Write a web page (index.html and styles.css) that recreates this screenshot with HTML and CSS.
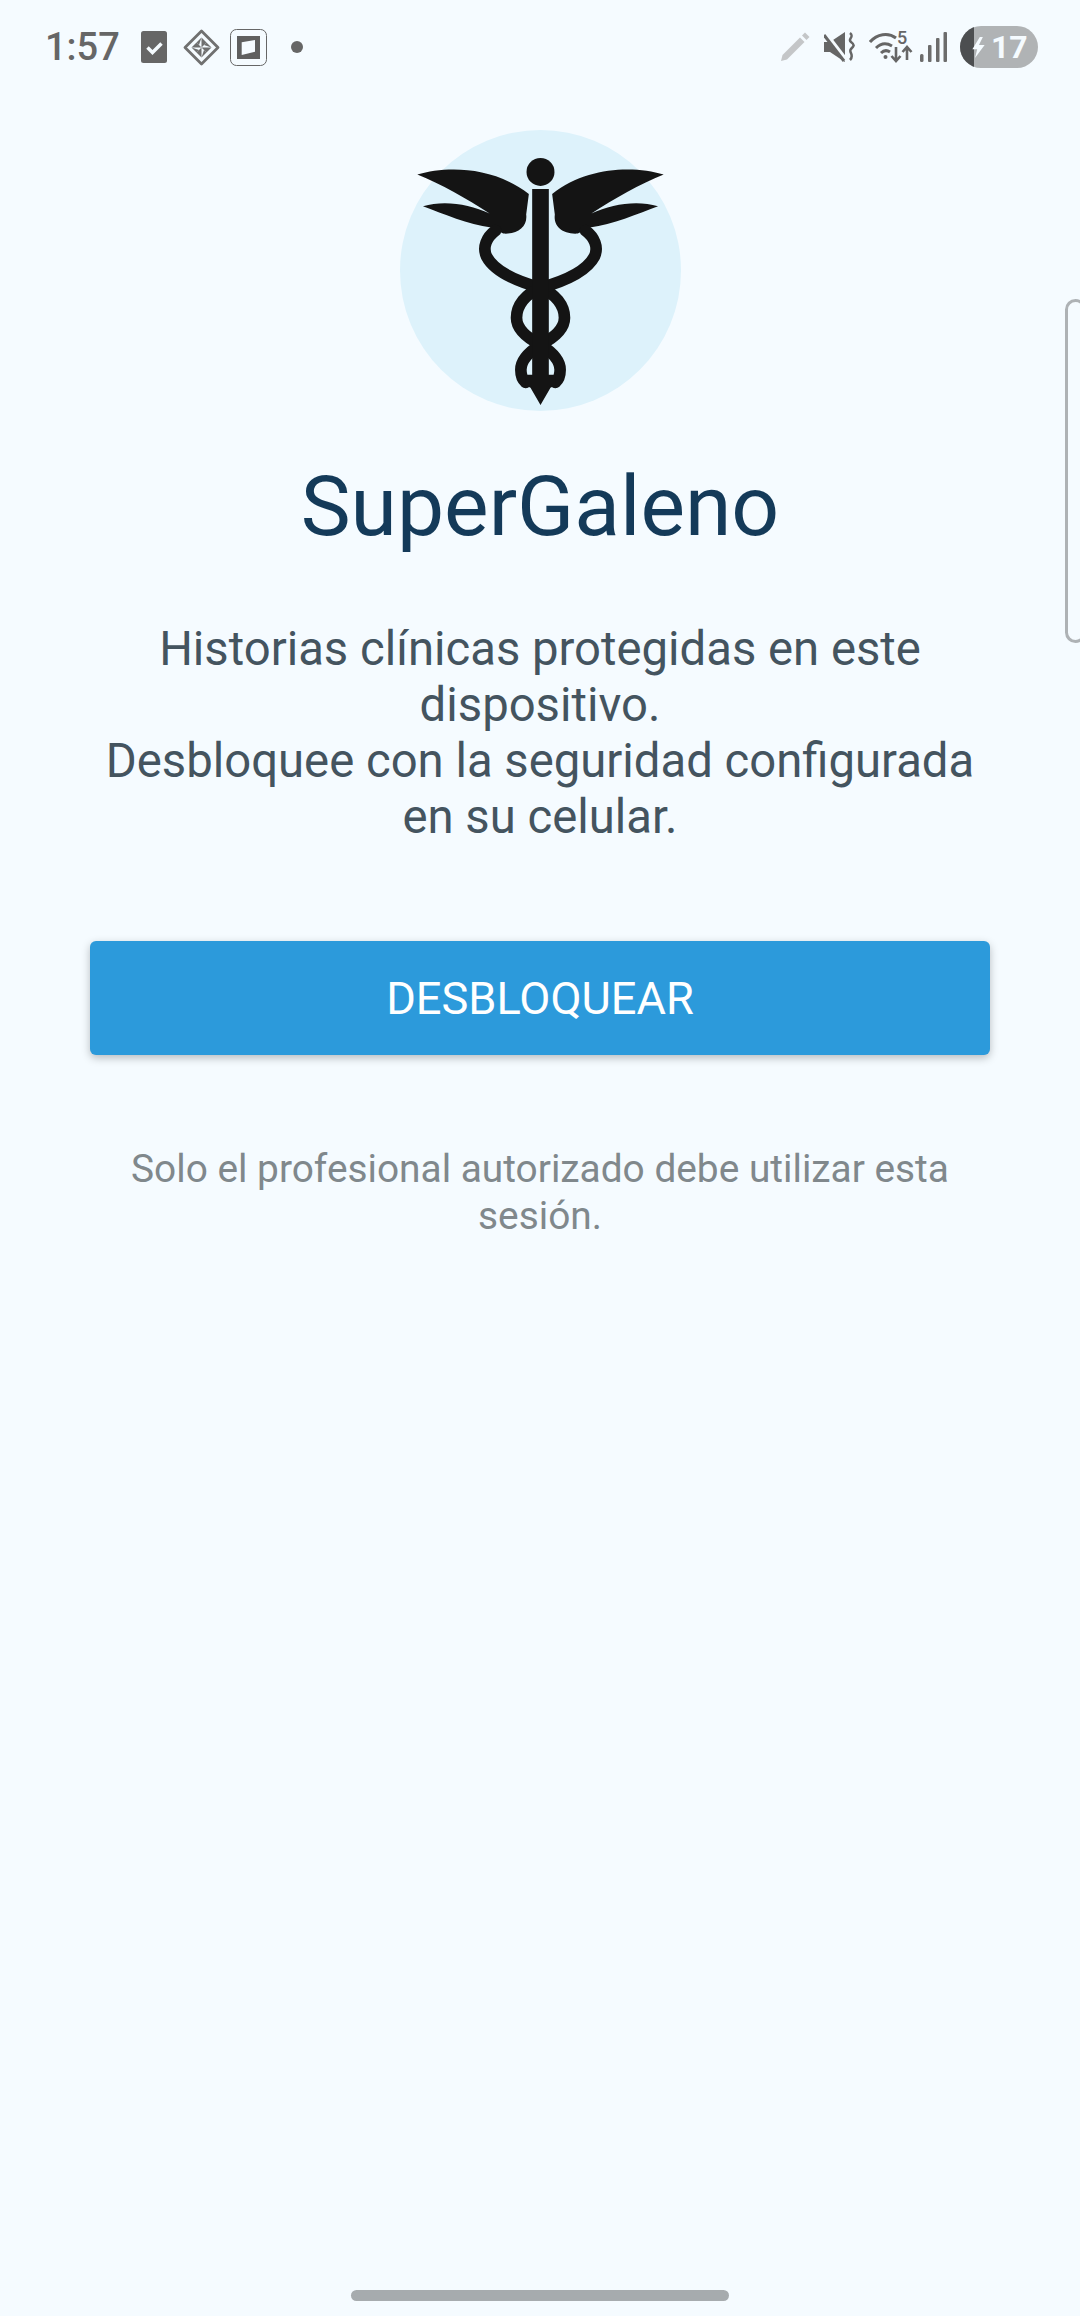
FILE: index.html
```html
<!DOCTYPE html>
<html lang="es">
<head>
    <meta charset="UTF-8">
    <meta name="viewport" content="width=device-width, initial-scale=1.0">
    <title>SuperGaleno</title>
    <link rel="stylesheet" href="styles.css">
</head>
<body>
    <div class="screen">
        <div class="status-bar">
            <div class="status-left">
                <span class="clock">1:57</span>
                <svg class="icon-check" viewBox="0 0 26 32">
                    <rect width="26" height="32" rx="2.5" fill="#666"/>
                    <path d="M6.500 16.500l5 5 9-9" fill="none" stroke="#f5fbff" stroke-width="3.500"/>
                </svg>
                <svg class="icon-diamond" viewBox="0 0 37 37">
                    <path d="M18.500 2L35 18.500 18.500 35 2 18.500Z" fill="none" stroke="#707070" stroke-width="2.800" stroke-linejoin="round"/>
                    <!-- pinwheel in the middle -->
                    <g fill="#6f6f6f">
                        <path d="M18.500 8.500L23.500 13.500 18.500 18.500Z"/>
                        <path d="M28.500 18.500L23.500 23.500 18.500 18.500Z"/>
                        <path d="M18.500 28.500L13.500 23.500 18.500 18.500Z"/>
                        <path d="M8.500 18.500L13.500 13.500 18.500 18.500Z"/>
                        <path d="M18.500 8.500L13.500 13.500 16 16Z"/>
                        <path d="M28.500 18.500L23.500 13.500 21 16Z"/>
                        <path d="M18.500 28.500L23.500 23.500 21 21Z"/>
                        <path d="M8.500 18.500L13.500 23.500 16 21Z"/>
                    </g>
                </svg>
                <svg class="icon-square" viewBox="0 0 37 37">
                    <rect x=".5" y=".5" width="36" height="36" rx="6" fill="none" stroke="#666"/>
                    <path d="M7 7h23v23H7Z" fill="#5f5f5f"/>
                    <path d="M11.700 13.300L25 11v11.700L11.700 26Z" fill="#f5fbff"/>
                </svg>
                <span class="dot"></span>
            </div>
            <div class="status-right">
                <svg class="icon-pencil" viewBox="0 0 30 30">
                    <path d="M1 29l1.500-6L20 5.500 24.500 10 7 27.500Z" fill="#c4c6c8"/>
                    <path d="M22 3.500l3-3L29.500 5l-3 3Z" fill="#c4c6c8"/>
                </svg>
                <svg class="icon-mute" viewBox="0 0 31 30">
                    <path d="M0 10h6L21 0v30L6 20H0Z" fill="#666"/>
                    <path d="M2 2l20 26" stroke="#f5fbff" stroke-width="4.500"/>
                    <path d="M0 3l20 26" stroke="#666" stroke-width="3"/>
                    <path d="M26 1c5 4-3 6 1 9s3 4 0 7 4 6-1 11" fill="none" stroke="#666" stroke-width="2.500"/>
                </svg>
                <div class="wifi">
                    <svg class="icon-wifi" viewBox="0 0 44 32">
                        <g fill="none" stroke="#666" stroke-width="3">
                            <path d="M1 11C8 3 19 1 27 7"/>
                            <path d="M7 17c5-5 11-5 16-2"/>
                            <path d="M12 22c3-3 6-3 9-1"/>
                            <path d="M27 16v13M22.500 25l4.500 5 4.500-5" stroke-width="2.600"/>
                            <path d="M38 29V17M33.500 21l4.500-5 4.500 5" stroke-width="2.600"/>
                        </g>
                        <circle cx="16.500" cy="26" r="2" fill="#666"/>
                    </svg>
                    <span class="wifi-gen">5</span>
                </div>
                <svg class="icon-signal" viewBox="0 0 28 30">
                    <g fill="#6c6c6c">
                        <rect x="1" y="22" width="3.500" height="8" rx="1.500"/>
                        <rect x="9" y="13" width="3.500" height="17" rx="1"/>
                        <rect x="17" y="6" width="3.500" height="24" rx="1"/>
                        <rect x="24.500" y="0" width="3.500" height="30" rx="1"/>
                    </g>
                </svg>
                <div class="battery">
                    <span class="battery-fill"></span>
                    <svg class="icon-bolt" viewBox="0 0 14 24">
                        <path d="M8.500 0L0 14h5.500L3 24l11-15H7.500L12 0Z" fill="#f5fbff"/>
                    </svg>
                    <span class="battery-level">17</span>
                </div>
            </div>
        </div>

        <div class="edge-handle"></div>

        <div class="content">
            <svg class="logo" viewBox="58 58 844 844">
                <circle cx="480" cy="480" r="422" fill="#ddf2fb"/>
                <g id="half">
                    <!-- left wing -->
                    <path fill="#141414" d="M110 192C200 165 340 168 445 250L437 312C442 350 410 372 368 369L332 351C262 342 190 310 127 287C190 268 265 280 327 309C260 265 180 220 110 192Z"/>
                    <!-- snake -->
                    <path fill="none" stroke="#141414" stroke-width="35" stroke-linecap="round" d="M345 360C318 380 305 410 318 438C340 480 400 510 480 532C525 550 552 585 552 622C552 655 525 680 480 703C445 725 421 750 421 778C421 795 426 808 435 816"/>
                </g>
                <use href="#half" transform="matrix(-1 0 0 1 960 0)"/>
                <circle cx="480" cy="184" r="42" fill="#141414"/>
                <!-- staff and arrow tip -->
                <path fill="#141414" d="M455 235H505V793H525V825L510 832L480 884L450 832L435 825V793H455Z"/>
            </svg>
            <h1 class="title">SuperGaleno</h1>
            <p class="lead">Historias clínicas protegidas en este dispositivo.<br>Desbloquee con la seguridad configurada en su celular.</p>
            <button class="unlock-btn" type="button">DESBLOQUEAR</button>
            <p class="note">Solo el profesional autorizado debe utilizar esta sesión.</p>
        </div>

        <div class="home-bar"></div>
    </div>
</body>
</html>
```

FILE: styles.css
```css
html, body {
    margin: 0;
    padding: 0;
}
body {
    background-color: #f5fbff;
    font-family: Roboto, "Liberation Sans", sans-serif;
}
.screen {
    position: relative;
    width: 1080px;
    height: 2316px;
    display: flex;
    flex-direction: column;
    overflow: hidden;
}

/* status bar */
.status-bar {
    height: 94px;
    padding: 0 42px 0 45px;
    display: flex;
    justify-content: space-between;
    align-items: center;
    box-sizing: border-box;
}
.status-left, .status-right {
    display: flex;
    align-items: center;
}
.clock {
    font-size: 38px;
    font-weight: 500;
    color: #666;
    width: 96px;
}
.icon-check {
    width: 26px;
    height: 32px;
}
.icon-diamond {
    width: 37px;
    height: 37px;
    margin-left: 16px;
}
.icon-square {
    width: 37px;
    height: 37px;
    margin-left: 10px;
}
.dot {
    width: 12px;
    height: 12px;
    margin-left: 24px;
    border-radius: 50%;
    background-color: #666;
}
.icon-pencil {
    width: 30px;
    height: 30px;
}
.icon-mute {
    width: 31px;
    height: 30px;
    margin-left: 14px;
}
.wifi {
    position: relative;
    width: 44px;
    height: 32px;
    margin-left: 14px;
}
.icon-wifi {
    display: block;
    width: 44px;
    height: 32px;
}
.wifi-gen {
    position: absolute;
    left: 28px;
    top: -3px;
    font-size: 18px;
    line-height: 20px;
    font-weight: 500;
    color: #666;
}
.icon-signal {
    width: 28px;
    height: 30px;
    margin-left: 6px;
}
.battery {
    position: relative;
    width: 78px;
    height: 42px;
    margin-left: 13px;
    border-radius: 21px;
    background-color: #b0b3b5;
    display: flex;
    align-items: center;
    overflow: hidden;
}
.battery-fill {
    position: absolute;
    left: 0;
    top: 0;
    width: 14px;
    height: 42px;
    background-color: #4c4e50;
}
.icon-bolt {
    position: relative;
    width: 13px;
    height: 21px;
    margin-left: 12px;
}
.battery-level {
    position: relative;
    margin-left: 6px;
    font-size: 32px;
    font-weight: 700;
    color: #f5fbff;
}

.edge-handle {
    position: absolute;
    right: -6px;
    top: 299px;
    width: 15px;
    height: 338px;
    border: 3px solid #aeb2b5;
    border-radius: 12px;
}

/* main column */
.content {
    padding: 36px 90px 0;
    display: flex;
    flex-direction: column;
    align-items: center;
    text-align: center;
}
.logo {
    width: 281px;
    height: 281px;
    display: block;
}
.title {
    margin: 50px 0 0;
    font-size: 84px;
    line-height: 92px;
    font-weight: 400;
    color: #143a59;
}
.lead {
    margin: 68px 0 0;
    width: 900px;
    font-size: 47.25px;
    line-height: 56px;
    color: #44545f;
}
.unlock-btn {
    width: 900px;
    height: 114px;
    margin-top: 96px;
    border: none;
    border-radius: 6px;
    background-color: #2c9adb;
    color: #fff;
    font-family: inherit;
    font-size: 45.2px;
    box-shadow: 0 3px 8px rgba(0, 0, 0, 0.25);
}
.note {
    margin: 90px 0 0;
    width: 860px;
    font-size: 38.85px;
    line-height: 47px;
    color: #80888c;
}

.home-bar {
    width: 378px;
    height: 11px;
    margin: auto auto 15px;
    border-radius: 6px;
    background-color: #a6abae;
}
```
